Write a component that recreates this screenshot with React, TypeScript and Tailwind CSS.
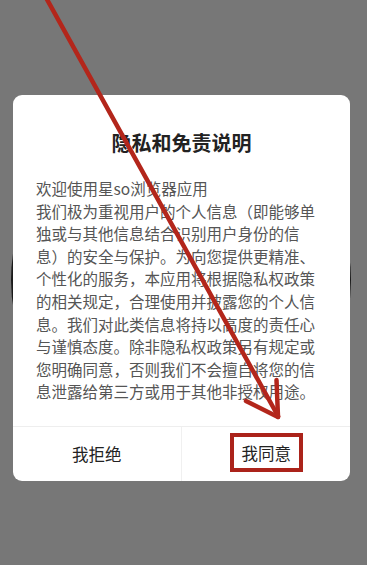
import React from 'react';

const bodyLines = [
    '欢迎使用星so浏览器应用',
    '我们极为重视用户的个人信息（即能够单',
    '独或与其他信息结合识别用户身份的信',
    '息）的安全与保护。为向您提供更精准、',
    '个性化的服务，本应用将根据隐私权政策',
    '的相关规定，合理使用并披露您的个人信',
    '息。我们对此类信息将持以高度的责任心',
    '与谨慎态度。除非隐私权政策另有规定或',
    '您明确同意，否则我们不会擅自将您的信',
    '息泄露给第三方或用于其他非授权用途。',
];

const Arrow: React.FC = () => (
    <svg className="absolute inset-0 pointer-events-none" width="367" height="565" viewBox="0 0 367 565">
        <g stroke="#b3261b" strokeWidth="4.5" strokeLinecap="round" fill="none">
            <line x1="44" y1="-6" x2="278" y2="416" />
            <line x1="278" y1="417" x2="246" y2="401" />
            <line x1="278" y1="417" x2="276.5" y2="380" />
        </g>
    </svg>
);

export default function App() {
    return (
        <div
            className="relative h-[565px] w-[367px] overflow-hidden bg-[#777777]"
            style={{ fontFamily: '"Noto Sans CJK SC", "Noto Sans", sans-serif' }}
        >
            {/* dark round shape peeking out behind the dialog */}
            <div className="absolute left-[11px] top-[110px] h-[340px] w-[340px] rounded-full bg-[#1a1a1a]" />

            <div className="relative ml-[13px] mt-[95px] w-[337px] inline-block rounded-[9px] bg-white">
                <h1 className="pt-[34px] text-center text-[20px] font-bold leading-[28px] text-[#222222]">
                    隐私和免责说明
                </h1>
                <div className="mt-[20px] px-[23px] text-[15.5px] leading-[22.6px] text-[#555555] whitespace-nowrap">
                    {bodyLines.map((l) => (
                        <div key={l}>{l}</div>
                    ))}
                </div>
                <div className="mt-[23px] flex h-[55px] border-t border-[#eeeeee]">
                    <button className="flex flex-1 items-center justify-center text-[16.5px] text-[#222222]">
                        我拒绝
                    </button>
                    <div className="w-px bg-[#f0f0f0]" />
                    <button className="flex flex-1 items-center justify-center pb-[2px] pl-[1px]">
                        <span className="flex h-[39px] w-[73px] items-center justify-center border-[4.5px] border-[#ab231a] text-[16.5px] text-[#222222]">
                            我同意
                        </span>
                    </button>
                </div>
            </div>

            <Arrow />
        </div>
    );
}
